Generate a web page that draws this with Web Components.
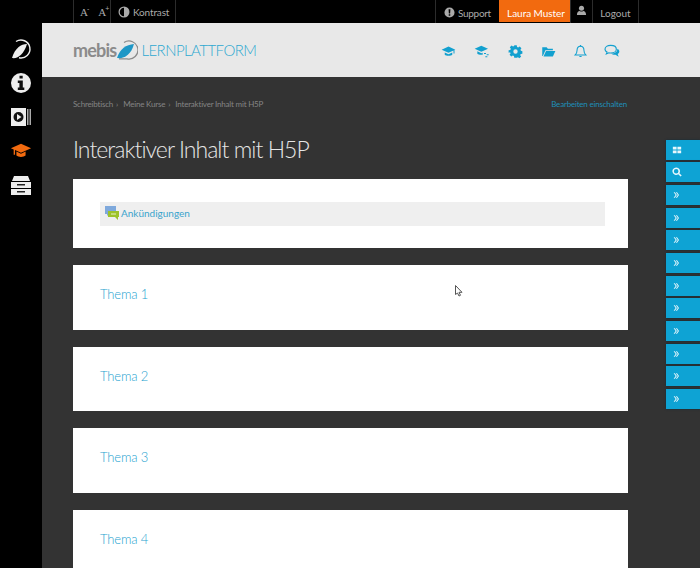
<!DOCTYPE html>
<html lang="de">
<head>
<meta charset="utf-8">
<title>Interaktiver Inhalt mit H5P</title>
<style>
  html, body { margin: 0; height: 568px; overflow: hidden; background: #333; }
  body { font-family: "Lato", "Liberation Sans", sans-serif; }
</style>
</head>
<body>
<mebis-app></mebis-app>

<script>
const ICONS = {
  cap: '<path d="M12 4 1 9l11 5 8-3.600V15h1.600V9.600L23 9z"/><path d="M6 13.600V17c2 2.400 10 2.400 12 0v-3.400l-6 2.700z"/>',
  capList: '<path d="M11 4 1 8.500l10 4.500 10-4.500z"/><path d="M5 12.500V16c1.500 1.500 5 2 8 1.500v-3l-2 .9z"/><path d="M15 15h3v1.500h-3zM19 17h3v1.500h-3zM17 20h3v1.500h-3z"/>',
  gear: '<path fill-rule="evenodd" d="M10 2h4l.5 2.700 1.900.8 2.300-1.600 2.800 2.800-1.600 2.300.8 1.900 2.300.5v4l-2.700.5-.8 1.900 1.600 2.300-2.800 2.800-2.300-1.600-1.900.8L14 22h-4l-.5-2.700-1.900-.8-2.300 1.600-2.800-2.800 1.600-2.300-.8-1.900L1 14v-4l2.700-.5.8-1.900-1.600-2.300 2.800-2.800 2.300 1.600 1.900-.8zM12 8.500a3.500 3.500 0 1 0 0 7 3.500 3.500 0 0 0 0-7z"/>',
  folder: '<path d="M2 5h7l2 2.500h8V10H7l-4 9H2z"/><path d="M8 11h15l-4 9H4z"/>',
  bell: '<path fill="none" stroke="currentColor" stroke-width="1.700" d="M12 3.500c-4 0-5.500 3-5.500 6.500 0 3.500-1 5.500-3 7.500h17c-2-2-3-4-3-7.500 0-3.500-1.500-6.500-5.500-6.500z"/><path d="M10 19h4c0 2.500-4 2.500-4 0zM11 1.500h2V4h-2z"/>',
  chat: '<path fill="none" stroke="currentColor" stroke-width="1.700" d="M10 3.500c-5 0-8.500 2.500-8.500 5.700 0 1.900 1.200 3.400 3 4.400L3.500 16.500l3.700-1.800c.9.200 1.800.3 2.800.3 5 0 8.500-2.500 8.500-5.800S15 3.500 10 3.500z"/><path d="M20 8.500c2 1 3 2.500 3 4.200 0 1.600-1 3-2.500 3.900l1.500 4-4.700-3c-2.700.2-5.300-.5-6.800-1.900 5 .3 9.800-2.300 9.500-7.200z"/>',
  user: '<circle cx="12" cy="7" r="5.500"/><path d="M2 22c0-6 3-8.500 6-9 2.500 1.500 5.500 1.500 8 0 3 .5 6 3 6 9z"/>',
  alert: '<path fill-rule="evenodd" d="M12 1a11 11 0 1 0 0 22 11 11 0 0 0 0-22zM10 5h4l-.6 9h-2.800zM10.300 16h3.400v3.200h-3.400z"/>',
  contrast: '<path fill-rule="evenodd" d="M12 1a11 11 0 1 0 0 22 11 11 0 0 0 0-22zM12 3.500v17a8.500 8.500 0 0 1 0-17z"/>',
  tiles: '<path d="M2 4h9v7H2zM13 4h9v7h-9zM2 13h9v7H2zM13 13h9v7h-9z"/>',
  search: '<path fill-rule="evenodd" d="M10 1a9 9 0 1 0 5 16.500l5.500 5.500 2.800-2.800-5.500-5.500A9 9 0 0 0 10 1zm0 3.500a5.500 5.500 0 1 1 0 11 5.500 5.500 0 0 1 0-11z"/>',
  chevrons: '<path d="M5 4h3.500l6 8-6 8H5l6-8z"/><path d="M11.500 4H15l6 8-6 8h-3.500l6-8z"/>'
};

function icon(name, size) {
  return `<svg width="${size}" height="${size}" viewBox="0 0 24 24" fill="currentColor" aria-hidden="true">${ICONS[name]}</svg>`;
}

class MebisSidebar extends HTMLElement {
  constructor() {
    super();
    this.attachShadow({ mode: 'open' }).innerHTML = `
      <style>
        :host { display: grid; grid-auto-rows: 34px; justify-items: center; align-items: center; align-content: start; width: 42px; flex: none; background: #000; padding-top: 9px; box-sizing: border-box; color: #eee; }
        svg { display: block; }
        .orange { color: #f26a0f; }
      </style>
      <svg width="22" height="22" viewBox="0 0 22 22">
        <path fill="none" stroke="#eee" stroke-width="1.400" d="M6 3.500A9 9 0 1 1 9 19.800"/>
        <path fill="#eee" d="M17 6C11 6 5 10 2 20c6 1 12-4 15-14z"/>
      </svg>
      <svg width="22" height="22" viewBox="0 0 22 22">
        <circle cx="11" cy="11" r="10" fill="#eee"/>
        <path fill="#111" d="M9.500 3.800h3.200v2.800H9.500zM7.800 8.500h5v7h1.500V18H7.800v-2.500h1.600V11H7.800z"/>
      </svg>
      <svg width="22" height="20" viewBox="0 0 22 20">
        <path fill="#eee" d="M1 1h15v18H1z"/>
        <path fill="#aaa" d="M17 2h1.500v16H17zM19.500 2H21v16h-1.500z"/>
        <circle cx="8.500" cy="10" r="5" fill="#111"/>
        <path fill="#eee" d="M7 7l4.500 3L7 13z"/>
      </svg>
      <svg class="orange" width="22" height="20" viewBox="0 0 24 20" fill="currentColor">
        <path d="M12 2 1 7l3 1.400V14h1.500V9L12 12l11-5z"/>
        <path d="M7 10.500V15c2 2 8 2 10 0v-4.500L12 13z"/>
      </svg>
      <svg width="22" height="21" viewBox="0 0 22 21">
        <path fill="#eee" d="M4 1h14l2 5H2z"/>
        <path fill="#eee" d="M1 7h20v6H1zM1 14h20v6H1z"/>
        <path fill="#222" d="M7 9h8v1.500H7zM7 16h8v1.500H7z"/>
      </svg>
    `;
  }
}

class MebisTopbar extends HTMLElement {
  constructor() {
    super();
    this.attachShadow({ mode: 'open' }).innerHTML = `
      <style>
        :host { display: flex; height: 23px; background: #000; color: #aaa; font-size: 10px; padding-right: 61px; flex: none; }
        .cell { display: flex; align-items: center; border-left: 1px solid #2c2c2c; box-sizing: border-box; white-space: nowrap; }
        .fonts { width: 37px; gap: 9px; padding-left: 6px; font-size: 11px; font-family: "Liberation Serif", serif; }
        .fonts sup { font-size: 7px; line-height: 0; margin-left: -1px; font-family: "Liberation Sans", sans-serif; }
        .contrast { width: 66px; gap: 3px; padding-left: 7px; border-right: 1px solid #2c2c2c; letter-spacing: -.15px; }
        .spacer { flex: 1; }
        .support { width: 64px; gap: 3px; padding-left: 8px; padding-top: 2px; letter-spacing: -.3px; }
        .name { width: 71px; background: #f26a0f; color: #fff; justify-content: center; border: 0; height: 22px; padding: 3px 0 0 3px; letter-spacing: -.05px; }
        .person { width: 22px; justify-content: center; padding-bottom: 2px; }
        .logout { width: 47px; justify-content: center; border-right: 1px solid #2c2c2c; padding-top: 2px; }
        svg { display: block; }
      </style>
      <div class="cell fonts"><span>A<sup>-</sup></span><span>A<sup>+</sup></span></div>
      <div class="cell contrast">${icon('contrast', 12)}<span>Kontrast</span></div>
      <div class="spacer"></div>
      <div class="cell support">${icon('alert', 11)}<span>Support</span></div>
      <div class="cell name">Laura Muster</div>
      <div class="cell person">${icon('user', 11)}</div>
      <div class="cell logout">Logout</div>
    `;
  }
}

class MebisHeader extends HTMLElement {
  constructor() {
    super();
    this.attachShadow({ mode: 'open' }).innerHTML = `
      <style>
        :host { display: flex; align-items: center; height: 54px; background: #e8e8e8; padding: 0 80px 0 31px; box-sizing: border-box; flex: none; }
        .logo { display: flex; align-items: center; }
        .mebis { font-size: 18px; font-weight: 700; color: #8b8b8b; letter-spacing: -.8px; }
        .logo svg { margin: 0 3px 0 0; }
        .title { font-size: 15px; color: #2fa8d1; font-weight: 300; letter-spacing: -.55px; }
        nav { margin-left: auto; display: flex; align-items: center; color: #12a0cf; padding-top: 2px; }
        nav svg { display: block; margin-left: 18px; }
        nav svg:nth-child(5), nav svg:nth-child(6) { margin-left: 16.500px; }
      </style>
      <div class="logo">
        <span class="mebis">mebis</span>
        <svg width="22" height="20" viewBox="0 0 22 20">
          <path fill="none" stroke="#8b8b8b" stroke-width="1.300" d="M8 2.500A9 9 0 1 1 11 18.800H3"/>
          <path fill="#1f97c6" d="M18 4C10 4.500 4 9 1 18c7 1 14-3 17-14z"/>
        </svg>
        <span class="title">LERNPLATTFORM</span>
      </div>
      <nav>
        ${icon('cap', 15)}${icon('capList', 16)}${icon('gear', 15)}${icon('folder', 15)}${icon('bell', 15)}${icon('chat', 16)}
      </nav>
    `;
  }
}

class MebisBreadcrumb extends HTMLElement {
  constructor() {
    super();
    this.attachShadow({ mode: 'open' }).innerHTML = `
      <style>
        :host { display: flex; justify-content: space-between; font-size: 8px; letter-spacing: -.2px; color: #858585; line-height: 12px; padding-right: 1px; }
        .trail { display: flex; gap: 3px; }
        .sep { margin-right: 2px; }
        a { color: #1f8fb8; }
      </style>
      <div class="trail"><span>Schreibtisch</span><span class="sep">›</span><span>Meine Kurse</span><span class="sep">›</span><span>Interaktiver Inhalt mit H5P</span></div>
      <a>Bearbeiten einschalten</a>
    `;
  }
}

class CourseCard extends HTMLElement {
  constructor() {
    super();
    this.attachShadow({ mode: 'open' }).innerHTML = `
      <style>
        :host { display: block; background: #fff; box-sizing: border-box; padding: 23px 23px 0 27px; position: relative; flex: none; }
      </style>
      <slot></slot>
    `;
  }
  connectedCallback() {
    this.style.height = this.getAttribute('height') + 'px';
  }
}

class TopicTitle extends HTMLElement {
  constructor() {
    super();
    this.attachShadow({ mode: 'open' }).innerHTML = `
      <style>
        :host { display: block; font-size: 13px; letter-spacing: -.15px; font-weight: 300; color: #1fa3cf; line-height: 14px; margin-top: -1px; }
      </style>
      <slot></slot>
    `;
  }
}

class ForumLink extends HTMLElement {
  constructor() {
    super();
    this.attachShadow({ mode: 'open' }).innerHTML = `
      <style>
        :host { display: flex; align-items: center; gap: 2px; height: 24px; box-sizing: border-box; padding: 0 0 2px 5px; background: #efefef; font-size: 10px; color: #3aa3cc; }
        svg { display: block; }
      </style>
      <svg width="14" height="14" viewBox="0 0 14 14">
        <path fill="#7fa9dc" d="M0 0h11v8H4L2 10V8H0z"/>
        <path fill="#9dc32a" d="M3 5h11v6h-1v3l-3-3H3z"/>
        <path fill="#e6f0c0" d="M6 7.500h5v1H6z"/>
      </svg>
      <slot></slot>
    `;
  }
}

class BlockDock extends HTMLElement {
  constructor() {
    super();
    const names = ['tiles', 'search', ...Array(10).fill('chevrons')];
    this.attachShadow({ mode: 'open' }).innerHTML = `
      <style>
        :host { display: flex; flex-direction: column; gap: 2.700px; width: 34px; flex: none; padding-top: 62.500px; }
        .tab { height: 20px; flex: none; background: #0ea3d4; color: #e8f7fc; display: flex; align-items: center; padding-left: 6px; box-shadow: 0 0 2px rgba(0, 40, 60, .7); }
        svg { display: block; }
      </style>
      ${names.map(n => `<div class="tab">${icon(n, n === 'chevrons' ? 8 : 10)}</div>`).join('')}
    `;
  }
}

class MebisApp extends HTMLElement {
  constructor() {
    super();
    this.attachShadow({ mode: 'open' }).innerHTML = `
      <style>
        :host { display: flex; flex-direction: column; width: 700px; height: 568px; overflow: hidden; background: #000; }
        mebis-topbar { padding-left: 73px; }
        .below { flex: 1; display: flex; min-height: 0; }
        .content { flex: 1; display: flex; flex-direction: column; min-width: 0; }
        .body { flex: 1; display: flex; background: #333; min-height: 0; }
        main { width: 555px; margin-left: 31px; margin-right: 38px; padding-top: 21px; flex: none; }
        h1 { font-size: 23px; letter-spacing: -.95px; font-weight: 300; color: #e6e6e6; margin: 23px 0 13px; line-height: 33px; }
        .cards { display: flex; flex-direction: column; gap: 17px; }
        .pointer { position: absolute; left: 382px; top: 20px; }
      </style>
      <mebis-topbar></mebis-topbar>
      <div class="below">
        <mebis-sidebar></mebis-sidebar>
        <div class="content">
          <mebis-header></mebis-header>
          <div class="body">
            <main>
              <mebis-breadcrumb></mebis-breadcrumb>
              <h1>Interaktiver Inhalt mit H5P</h1>
              <div class="cards">
                <course-card height="69"><forum-link>Ankündigungen</forum-link></course-card>
                <course-card height="65"><topic-title>Thema 1</topic-title>
                  <svg class="pointer" width="8" height="12" viewBox="0 0 8 12"><path fill="#fff" stroke="#555" d="M.5.5v9l2-1.500 1.500 3 1.500-.7-1.500-3H7z"/></svg>
                </course-card>
                <course-card height="64"><topic-title>Thema 2</topic-title></course-card>
                <course-card height="65"><topic-title>Thema 3</topic-title></course-card>
                <course-card height="65"><topic-title>Thema 4</topic-title></course-card>
              </div>
            </main>
            <block-dock></block-dock>
          </div>
        </div>
      </div>
    `;
  }
}

customElements.define('mebis-sidebar', MebisSidebar);
customElements.define('mebis-topbar', MebisTopbar);
customElements.define('mebis-header', MebisHeader);
customElements.define('mebis-breadcrumb', MebisBreadcrumb);
customElements.define('course-card', CourseCard);
customElements.define('topic-title', TopicTitle);
customElements.define('forum-link', ForumLink);
customElements.define('block-dock', BlockDock);
customElements.define('mebis-app', MebisApp);
</script>
</body>
</html>
